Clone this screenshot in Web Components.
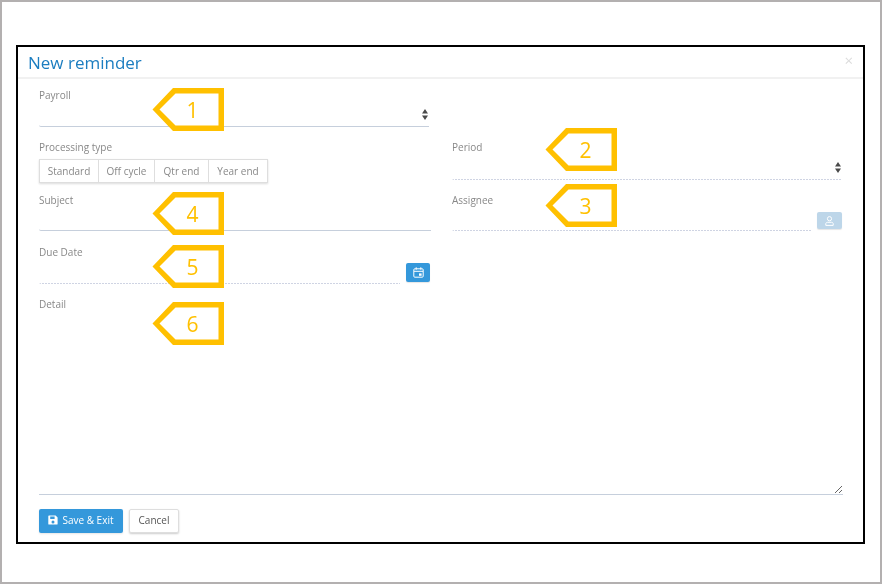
<!DOCTYPE html>
<html>
<head>
<meta charset="utf-8">
<title>New reminder</title>
<style>
    html, body { margin: 0; padding: 0; background: #fff; }
</style>
</head>
<body>
<reminder-page>
    <reminder-field label="Payroll" line="solid" style="grid-column: 1; grid-row: 1; margin-right: 2px;">
        <select-arrows slot="end"></select-arrows>
    </reminder-field>
    <reminder-type style="grid-column: 1; grid-row: 2;"></reminder-type>
    <reminder-field label="Period" line="dotted" control="26" style="grid-column: 2; grid-row: 2; margin-right: 1px;">
        <select-arrows slot="end"></select-arrows>
    </reminder-field>
    <reminder-field label="Subject" line="solid" control="24" style="grid-column: 1; grid-row: 3;"></reminder-field>
    <reminder-field label="Assignee" line="dotted" control="24" style="grid-column: 2; grid-row: 3;">
        <icon-button slot="after" icon="user" muted></icon-button>
    </reminder-field>
    <reminder-field label="Due Date" line="dotted" style="grid-column: 1; grid-row: 4;">
        <icon-button slot="after" icon="calendar"></icon-button>
    </reminder-field>
    <reminder-detail slot="detail"></reminder-detail>
    <form-button slot="footer" primary>Save &amp; Exit</form-button>
    <form-button slot="footer">Cancel</form-button>

    <step-callout slot="callouts" style="left: 150px; top: 86px;">1</step-callout>
    <step-callout slot="callouts" style="left: 543px; top: 126px;">2</step-callout>
    <step-callout slot="callouts" style="left: 543px; top: 182px;">3</step-callout>
    <step-callout slot="callouts" style="left: 150px; top: 190px;">4</step-callout>
    <step-callout slot="callouts" style="left: 150px; top: 243px;">5</step-callout>
    <step-callout slot="callouts" style="left: 150px; top: 300px;">6</step-callout>
</reminder-page>

<script>
    const FONT = '"Open Sans", "Noto Sans", sans-serif';

    class ReminderPage extends HTMLElement {
        constructor() {
            super();
            this.attachShadow({ mode: 'open' });
            this.shadowRoot.innerHTML = `
                <style>
                    :host {
                        display: block;
                        position: relative;
                        box-sizing: border-box;
                        width: 882px;
                        height: 584px;
                        border: 2px solid #b3b0b0;
                        padding: 43px 15px 38px 14px;
                        font-family: ${FONT};
                        overflow: hidden;
                    }
                    .frame {
                        box-sizing: border-box;
                        height: 499px;
                        border: 2px solid #000;
                        display: flex;
                        flex-direction: column;
                        will-change: opacity;
                    }
                    header {
                        box-sizing: border-box;
                        height: 32px;
                        border-bottom: 2px solid #f1f1f1;
                        padding: 0 10px;
                        display: flex;
                        justify-content: space-between;
                        align-items: center;
                    }
                    h1 {
                        margin: 0;
                        font-size: 17px;
                        font-weight: 400;
                        color: #1b7dc0;
                    }
                    .close {
                        color: #dcdcdc;
                        font-size: 15px;
                        line-height: 15px;
                        margin-top: -3px;
                    }
                    .grid {
                        margin: 9px 21px 0;
                        display: grid;
                        grid-template-columns: 392px 391px;
                        grid-template-rows: 52px 53px 52px 52px;
                        column-gap: 21px;
                    }
                    footer {
                        margin: 14px 21px 0;
                        display: flex;
                        gap: 6px;
                        align-items: flex-start;
                    }
                    .detail { margin: 0 21px; display: block; }
                </style>
                <div class="frame">
                    <header>
                        <h1>New reminder</h1>
                        <span class="close">×</span>
                    </header>
                    <div class="grid"><slot></slot></div>
                    <div class="detail"><slot name="detail"></slot></div>
                    <footer><slot name="footer"></slot></footer>
                </div>
                <slot name="callouts"></slot>
            `;
        }
    }

    class ReminderField extends HTMLElement {
        constructor() {
            super();
            this.attachShadow({ mode: 'open' });
        }
        connectedCallback() {
            const line = this.getAttribute('line') || 'solid';
            const height = this.getAttribute('control') || 25;
            const rule = line === 'solid'
                ? 'border-bottom: 1px solid #c6cfdc;'
                : `background: repeating-linear-gradient(90deg, #cfd4e3 0 2px, transparent 2px 3px) left bottom / 100% 1px no-repeat;`;
            this.shadowRoot.innerHTML = `
                <style>
                    :host { display: block; }
                    .label {
                        display: block;
                        font-size: 10px;
                        line-height: 14px;
                        color: #888;
                    }
                    .row { display: flex; align-items: flex-end; gap: 6px; }
                    .control {
                        flex: 1;
                        min-width: 0;
                        box-sizing: border-box;
                        height: ${height}px;
                        ${rule}
                        border-bottom-left-radius: 2px;
                        display: flex;
                        justify-content: flex-end;
                        align-items: center;
                    }
                    ::slotted(icon-button) { margin: 0 1px 2px 0; }
                </style>
                <span class="label">${this.getAttribute('label')}</span>
                <div class="row">
                    <div class="control"><slot name="end"></slot></div>
                    <slot name="after"></slot>
                </div>
            `;
        }
    }

    class SelectArrows extends HTMLElement {
        constructor() {
            super();
            this.attachShadow({ mode: 'open' });
            this.shadowRoot.innerHTML = `
                <style>
                    :host { display: block; width: 6px; height: 11px; margin: 0 1px 0 0; }
                    svg { display: block; }
                </style>
                <svg width="6" height="11" viewBox="0 0 6 11"><path d="M3 0 6 4.5H0zM0 6.5h6L3 11z" fill="#4a4a4a"/></svg>
            `;
        }
    }

    class ReminderType extends HTMLElement {
        constructor() {
            super();
            this.attachShadow({ mode: 'open' });
            this.shadowRoot.innerHTML = `
                <style>
                    :host { display: block; }
                    .label {
                        display: block;
                        font-size: 10px;
                        line-height: 14px;
                        color: #888;
                    }
                    .group {
                        display: inline-flex;
                        margin-top: 5px;
                        box-shadow: 0 1px 2px rgba(0, 0, 0, 0.14);
                    }
                    button {
                        box-sizing: border-box;
                        height: 24px;
                        padding: 0;
                        background: #fff;
                        border: 1px solid #dedede;
                        border-left: none;
                        font: 10px ${FONT};
                        color: #888;
                    }
                    button:first-child { border-left: 1px solid #dedede; }
                </style>
                <span class="label">Processing type</span>
                <div class="group">
                    <button style="width: 60px">Standard</button>
                    <button style="width: 56px">Off cycle</button>
                    <button style="width: 54px">Qtr end</button>
                    <button style="width: 59px">Year end</button>
                </div>
            `;
        }
    }

    class IconButton extends HTMLElement {
        constructor() {
            super();
            this.attachShadow({ mode: 'open' });
        }
        connectedCallback() {
            const icons = {
                calendar: `<svg width="11" height="11" viewBox="0 0 11 11" fill="none" stroke="#fff">
                    <rect x="0.8" y="1.8" width="9.4" height="8.4" rx="1"/>
                    <path d="M1 4.3h9M3.2 0.3v2.4M7.8 0.3v2.4"/>
                    <rect x="6" y="6.4" width="2.6" height="2.4" fill="#fff" stroke="none"/>
                </svg>`,
                user: `<svg width="9" height="10" viewBox="0 0 9 10" fill="none" stroke="#fff">
                    <circle cx="4.5" cy="2.7" r="2.1"/>
                    <path d="M0.8 9.4V7.8C0.8 6.8 1.6 6.3 2.5 6.3h4c0.9 0 1.7 0.5 1.7 1.5v1.6z"/>
                </svg>`
            };
            const muted = this.hasAttribute('muted');
            this.shadowRoot.innerHTML = `
                <style>
                    :host {
                        display: flex;
                        flex: none;
                        justify-content: center;
                        align-items: center;
                        box-sizing: border-box;
                        width: ${muted ? 25 : 24}px;
                        height: ${muted ? 17 : 19}px;
                        background: ${muted ? '#bdd6e9' : '#3498db'};
                        border-radius: 2px;
                        box-shadow: 0 1px 1px rgba(0, 0, 0, 0.1);
                    }
                    svg { display: block; }
                </style>
                ${icons[this.getAttribute('icon')]}
            `;
        }
    }

    class ReminderDetail extends HTMLElement {
        constructor() {
            super();
            this.attachShadow({ mode: 'open' });
            this.shadowRoot.innerHTML = `
                <style>
                    :host { display: block; }
                    .label {
                        display: block;
                        font-size: 10px;
                        line-height: 14px;
                        color: #888;
                    }
                    textarea {
                        display: block;
                        box-sizing: border-box;
                        width: 804px;
                        height: 184px;
                        margin: 0;
                        padding: 0;
                        border: none;
                        border-bottom: 1px solid #c6cfdc;
                        outline: none;
                        background: transparent;
                    }
                </style>
                <span class="label">Detail</span>
                <textarea></textarea>
            `;
        }
    }

    class FormButton extends HTMLElement {
        constructor() {
            super();
            this.attachShadow({ mode: 'open' });
        }
        connectedCallback() {
            const primary = this.hasAttribute('primary');
            const disk = primary ? `<svg width="10" height="10" viewBox="0 0 10 10">
                <path fill="#fff" fill-rule="evenodd" d="M1 0.5h6.6L9.6 2.5V8.9c0 .4-.3 .7-.7 .7H1c-.4 0-.7-.3-.7-.7V1.2C.3 .8 .6 .5 1 .5zM2.2 1.6V4H6.6V1.6zM5 5.6a1.5 1.5 0 1 0 0 3 1.5 1.5 0 0 0 0-3z"/>
            </svg>` : '';
            this.shadowRoot.innerHTML = `
                <style>
                    :host {
                        display: inline-flex;
                        align-items: center;
                        justify-content: center;
                        gap: 4px;
                        box-sizing: border-box;
                        width: ${primary ? 84 : 50}px;
                        height: 24px;
                        padding-bottom: 2px;
                        border-radius: 2px;
                        font-size: 10px;
                        color: ${primary ? '#fff' : '#555'};
                        background: ${primary ? '#3498db' : '#fff'};
                        border: ${primary ? 'none' : '1px solid #dedede'};
                        box-shadow: 0 1px 2px rgba(0, 0, 0, ${primary ? 0.1 : 0.2});
                    }
                    svg { display: block; }
                </style>
                ${disk}<slot></slot>
            `;
        }
    }

    class StepCallout extends HTMLElement {
        constructor() {
            super();
            this.attachShadow({ mode: 'open' });
            this.shadowRoot.innerHTML = `
                <style>
                    :host {
                        position: absolute;
                        display: block;
                        width: 72px;
                        height: 43px;
                        will-change: opacity;
                    }
                    svg { position: absolute; left: 0; top: 0; }
                    .num {
                        position: absolute;
                        left: 22px;
                        right: 13px;
                        top: 0;
                        height: 43px;
                        line-height: 44px;
                        text-align: center;
                        font-size: 21px;
                        color: #ffc000;
                    }
                </style>
                <svg width="72" height="43" viewBox="0 0 72 43">
                    <path fill="#ffc000" fill-rule="evenodd" d="M0.5 21.5 21 0H72V43H21zM7.5 21.5 23.5 37.5H66.5V5.5H23.5z"/>
                </svg>
                <span class="num"><slot></slot></span>
            `;
        }
    }

    customElements.define('reminder-page', ReminderPage);
    customElements.define('reminder-field', ReminderField);
    customElements.define('select-arrows', SelectArrows);
    customElements.define('reminder-type', ReminderType);
    customElements.define('icon-button', IconButton);
    customElements.define('reminder-detail', ReminderDetail);
    customElements.define('form-button', FormButton);
    customElements.define('step-callout', StepCallout);
</script>
</body>
</html>
